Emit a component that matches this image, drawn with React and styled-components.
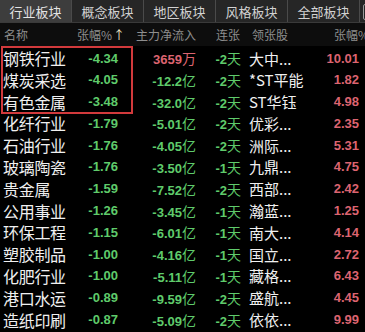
import React from 'react'
import styled, { createGlobalStyle } from 'styled-components'

const GlobalStyle = createGlobalStyle`
  html, body {
    margin: 0;
    padding: 0;
    background: #000;
  }
  body {
    font-family: "Liberation Sans", "Noto Sans CJK SC", sans-serif;
  }
`

const tabs = ['行业板块', '概念板块', '地区板块', '风格板块', '全部板块']

const rows = [
  { name: '钢铁行业', chg: '-4.34', flow: '3659', unit: '万', days: '-2', stock: '大中...', pct: '10.01' },
  { name: '煤炭采选', chg: '-4.05', flow: '-12.2', unit: '亿', days: '-2', stock: '*ST平能', pct: '1.82' },
  { name: '有色金属', chg: '-3.48', flow: '-32.0', unit: '亿', days: '-2', stock: 'ST华钰', pct: '4.98' },
  { name: '化纤行业', chg: '-1.79', flow: '-5.01', unit: '亿', days: '-2', stock: '优彩...', pct: '2.35' },
  { name: '石油行业', chg: '-1.76', flow: '-4.05', unit: '亿', days: '-2', stock: '洲际...', pct: '5.31' },
  { name: '玻璃陶瓷', chg: '-1.76', flow: '-3.50', unit: '亿', days: '-1', stock: '九鼎...', pct: '4.75' },
  { name: '贵金属', chg: '-1.59', flow: '-7.52', unit: '亿', days: '-2', stock: '西部...', pct: '2.42' },
  { name: '公用事业', chg: '-1.26', flow: '-3.45', unit: '亿', days: '-1', stock: '瀚蓝...', pct: '1.25' },
  { name: '环保工程', chg: '-1.15', flow: '-6.01', unit: '亿', days: '-1', stock: '南大...', pct: '4.14' },
  { name: '塑胶制品', chg: '-1.00', flow: '-4.16', unit: '亿', days: '-1', stock: '国立...', pct: '2.72' },
  { name: '化肥行业', chg: '-1.00', flow: '-5.11', unit: '亿', days: '-1', stock: '藏格...', pct: '6.43' },
  { name: '港口水运', chg: '-0.89', flow: '-9.59', unit: '亿', days: '-2', stock: '盛航...', pct: '4.45' },
  { name: '造纸印刷', chg: '-0.87', flow: '-5.09', unit: '亿', days: '-2', stock: '依依...', pct: '9.99' },
]

const GREEN = '#5fcb6b'
const RED = '#dc6470'

const COLS = '70px 48px 78px 45px 79px 1fr'

const App = () => {
  return (
    <Page>
      <GlobalStyle />
      <TabBar>
        {tabs.map((t, i) => (
          <Tab key={t} active={i === 0}>{t}</Tab>
        ))}
        <HelpBox>?</HelpBox>
      </TabBar>
      <HeaderRow>
        <HeadCell pad={4}>名称</HeadCell>
        <HeadCell pad={7}>张幅%<Arrow>↑</Arrow></HeadCell>
        <HeadCell pad={18}>主力净流入</HeadCell>
        <HeadCell pad={20}>连张</HeadCell>
        <HeadCell pad={11}>领张股</HeadCell>
        <HeadCell pad={14}>张幅%</HeadCell>
      </HeaderRow>
      <Body>
        <Highlight />
        {rows.map((r) => (
          <Row key={r.name}>
            <Name>{r.name}</Name>
            <Num color={GREEN}>{r.chg}</Num>
            <Num color={r.unit === '万' ? RED : GREEN}>
              {r.flow}<Unit>{r.unit}</Unit>
            </Num>
            <Days>{r.days}<Unit>天</Unit></Days>
            <Stock>{r.stock}</Stock>
            <Pct>{r.pct}</Pct>
          </Row>
        ))}
      </Body>
    </Page>
  )
}

const Page = styled.div`
  width: 365px;
  height: 332px;
  overflow: hidden;
  background: #000;
`

const TabBar = styled.div`
  display: flex;
  height: 23px;
  background: #262626;
  border-bottom: 1px solid #3a3a3a;
  box-sizing: border-box;
  overflow: hidden;
`

const Tab = styled.div`
  flex: 0 0 72px;
  display: flex;
  align-items: center;
  justify-content: center;
  font-family: "Noto Sans CJK SC", sans-serif;
  font-size: 13px;
  color: ${(p) => (p.active ? '#e4e4e4' : '#d2d2d2')};
  background: ${(p) => (p.active ? '#3d3d3d' : '#262626')};
  border-right: 1px solid #4a4a4a;
  box-sizing: border-box;
`

const HelpBox = styled.div`
  flex: 0 0 auto;
  margin: 4px 0 0 3px;
  width: 12px;
  height: 14px;
  border: 1px solid #9a9a9a;
  border-radius: 2px;
  color: #cfcfcf;
  font-size: 11px;
  line-height: 14px;
  text-align: center;
`

const HeaderRow = styled.div`
  display: grid;
  grid-template-columns: ${COLS};
  height: 23px;
  align-items: center;
  background: #0d0d0d;
  white-space: nowrap;
`

const HeadCell = styled.div`
  padding-left: ${(p) => p.pad}px;
  font-family: "Noto Sans CJK SC", sans-serif;
  font-size: 12px;
  color: #8e8e8e;
  overflow: visible;
`

const Arrow = styled.span`
  color: #f2ecc8;
  margin-left: 1px;
`

const Body = styled.div`
  position: relative;
`

const Highlight = styled.div`
  position: absolute;
  left: 1px;
  top: 0;
  width: 132px;
  height: 68px;
  border: 2px solid #d23a3c;
  box-sizing: border-box;
  pointer-events: none;
`

const Row = styled.div`
  display: grid;
  grid-template-columns: ${COLS};
  height: 21.8px;
  align-items: center;
  white-space: nowrap;
`

const Name = styled.div`
  padding-left: 3px;
  font-family: "Noto Sans CJK SC", sans-serif;
  font-size: 16px;
  color: #f0f0f0;
  letter-spacing: -0.3px;
`

const Num = styled.div`
  text-align: right;
  font-weight: bold;
  font-size: 13px;
  color: ${(p) => p.color};
`

const Unit = styled.span`
  font-family: "Noto Sans CJK SC", sans-serif;
  font-weight: normal;
  font-size: 14px;
`

const Days = styled.div`
  text-align: right;
  font-weight: bold;
  font-size: 13px;
  color: ${GREEN};
`

const Stock = styled.div`
  padding-left: 8px;
  font-family: "Noto Sans CJK SC", sans-serif;
  font-size: 15px;
  color: #f0f0f0;
`

const Pct = styled.div`
  text-align: right;
  padding-right: 6px;
  font-weight: bold;
  font-size: 13px;
  color: ${RED};
`

export default App
